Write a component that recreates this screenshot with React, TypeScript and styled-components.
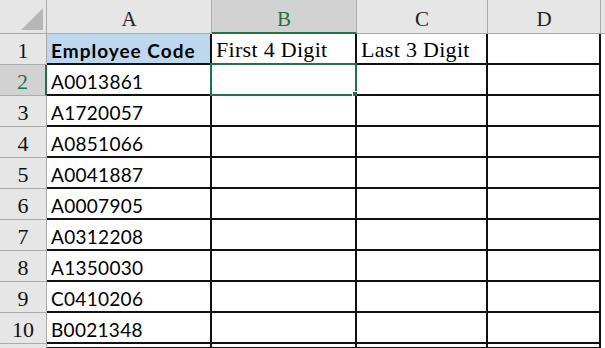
import * as React from 'react';
import styled, { createGlobalStyle, css } from 'styled-components';

const GlobalStyle = createGlobalStyle`
    html, body {
        margin: 0;
        padding: 0;
        background: #ffffff;
        overflow: hidden;
    }
`;

const GREEN = '#217346';

const Sheet = styled.div`
    display: grid;
    grid-template-columns: 47px 165px 145px 131px 113px 1fr;
    grid-template-rows: 34px repeat(10, 31px) 1fr;
    width: 605px;
    height: 348px;
    background: #ffffff;
`;

const Corner = styled.div`
    position: relative;
    background: #e6e6e6;
    border-right: 1px solid #ababab;
    border-bottom: 1px solid #ababab;
    box-sizing: border-box;
`;

const CornerTriangle = styled.div`
    position: absolute;
    right: 3px;
    bottom: 3px;
    width: 0;
    height: 0;
    border-left: 22px solid transparent;
    border-bottom: 22px solid #b7b7b7;
`;

const ColHead = styled.div<{ $active?: boolean }>`
    display: flex;
    align-items: center;
    justify-content: center;
    box-sizing: border-box;
    padding-top: 6px;
    background: ${p => (p.$active ? '#d2d2d2' : '#e6e6e6')};
    color: ${p => (p.$active ? GREEN : '#222222')};
    border-right: 1px solid #ababab;
    border-bottom: ${p => (p.$active ? `2px solid ${GREEN}` : '1px solid #ababab')};
    font-family: "Liberation Serif", serif;
    font-size: 21px;
`;

const RowHead = styled.div<{ $active?: boolean }>`
    display: flex;
    align-items: center;
    justify-content: center;
    box-sizing: border-box;
    padding-top: 3px;
    background: ${p => (p.$active ? '#d2d2d2' : '#e6e6e6')};
    color: ${p => (p.$active ? GREEN : '#111111')};
    border-right: ${p => (p.$active ? `2px solid ${GREEN}` : '1px solid #ababab')};
    border-bottom: 1px solid #ababab;
    font-family: "Liberation Serif", serif;
    font-size: 22px;
`;

const Cell = styled.div<{ $fill?: string; $serif?: boolean; $bold?: boolean }>`
    position: relative;
    display: flex;
    align-items: center;
    box-sizing: border-box;
    padding: 3px 0 0 4px;
    white-space: nowrap;
    background: ${p => p.$fill || '#ffffff'};
    border-right: 2px solid #111111;
    border-bottom: 2px solid #111111;
    color: #000000;
    ${p =>
        p.$serif
            ? css`
                  font-family: "Liberation Serif", serif;
                  font-size: 22px;
              `
            : css`
                  font-family: Lato, "Open Sans", sans-serif;
                  font-size: 19px;
              `}
    font-weight: ${p => (p.$bold ? 700 : 400)};
    letter-spacing: ${p => (p.$bold ? '1px' : '0.3px')};
`;

const Blank = styled.div<{ $head?: boolean }>`
    background: ${p => (p.$head ? '#e6e6e6' : '#ffffff')};
    border-bottom: ${p => (p.$head ? '1px solid #ababab' : 'none')};
    box-sizing: border-box;
`;

const Selection = styled.div`
    position: absolute;
    left: -2px;
    top: -2px;
    right: -2px;
    bottom: -2px;
    border: 2px solid ${GREEN};
    pointer-events: none;
`;

const FillHandle = styled.div`
    position: absolute;
    right: -5px;
    bottom: -5px;
    width: 6px;
    height: 6px;
    background: ${GREEN};
    border: 1px solid #ffffff;
`;

const codes = [
    'A0013861',
    'A1720057',
    'A0851066',
    'A0041887',
    'A0007905',
    'A0312208',
    'A1350030',
    'C0410206',
    'B0021348',
];

const columns = ['A', 'B', 'C', 'D'];

export default function App() {
    return (
        <>
            <GlobalStyle />
            <Sheet>
                <Corner>
                    <CornerTriangle />
                </Corner>
                {columns.map(c => (
                    <ColHead key={c} $active={c === 'B'}>{c}</ColHead>
                ))}
                <Blank $head />

                <RowHead>1</RowHead>
                <Cell $fill="#bdd7ee" $bold>Employee Code</Cell>
                <Cell $serif>First 4 Digit</Cell>
                <Cell $serif>Last 3 Digit</Cell>
                <Cell />
                <Blank />

                {codes.map((code, i) => (
                    <React.Fragment key={code}>
                        <RowHead $active={i === 0}>{i + 2}</RowHead>
                        <Cell>{code}</Cell>
                        <Cell>
                            {i === 0 && (
                                <Selection>
                                    <FillHandle />
                                </Selection>
                            )}
                        </Cell>
                        <Cell />
                        <Cell />
                        <Blank />
                    </React.Fragment>
                ))}
                <RowHead />
                <Cell />
                <Cell />
                <Cell />
                <Cell />
                <Blank />
            </Sheet>
        </>
    );
}
